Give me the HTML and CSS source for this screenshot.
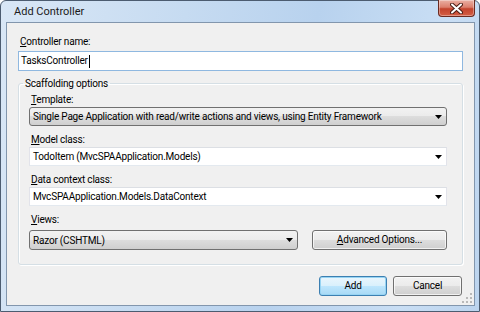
FILE: index.html
```html
<!DOCTYPE html>
<html lang="en">
<head>
    <meta charset="UTF-8">
    <title>Add Controller</title>
    <link rel="stylesheet" href="styles.css">
</head>
<body>
    <div class="window">
        <div class="titlebar">
            <span class="title">Add Controller</span>
            <div class="close">
                <svg width="13" height="11" viewBox="0 0 13 11">
                    <path d="M2 1.5 L11 9.5 M11 1.5 L2 9.5" stroke="#4a1c14" stroke-width="4" stroke-linecap="round"/>
                    <path d="M2 1.5 L11 9.5 M11 1.5 L2 9.5" stroke="#fff" stroke-width="2" stroke-linecap="round"/>
                </svg>
            </div>
        </div>
        <div class="client">
            <label class="lbl"><u>C</u>ontroller name:</label>
            <div class="textbox">TasksController<span class="caret"></span></div>

            <fieldset class="group">
                <legend>Scaffolding options</legend>
                <div class="field">
                    <label class="lbl"><u>T</u>emplate:</label>
                    <div class="combo list">
                        <span>Single Page Application with read/write actions and views, using Entity Framework</span>
                        <svg class="arrow" width="7" height="4" viewBox="0 0 7 4"><path d="M0 0 H7 L3.5 4 Z" fill="#000"/></svg>
                    </div>
                </div>
                <div class="field">
                    <label class="lbl"><u>M</u>odel class:</label>
                    <div class="combo edit">
                        <span>TodoItem (MvcSPAApplication.Models)</span>
                        <svg class="arrow" width="7" height="4" viewBox="0 0 7 4"><path d="M0 0 H7 L3.5 4 Z" fill="#000"/></svg>
                    </div>
                </div>
                <div class="field">
                    <label class="lbl"><u>D</u>ata context class:</label>
                    <div class="combo edit">
                        <span>MvcSPAApplication.Models.DataContext</span>
                        <svg class="arrow" width="7" height="4" viewBox="0 0 7 4"><path d="M0 0 H7 L3.5 4 Z" fill="#000"/></svg>
                    </div>
                </div>
                <div class="field">
                    <label class="lbl"><u>V</u>iews:</label>
                    <div class="views-row">
                        <div class="combo list views">
                            <span>Razor (CSHTML)</span>
                            <svg class="arrow" width="7" height="4" viewBox="0 0 7 4"><path d="M0 0 H7 L3.5 4 Z" fill="#000"/></svg>
                        </div>
                        <div class="btn adv"><u>A</u>dvanced Options...</div>
                    </div>
                </div>
            </fieldset>

            <div class="actions">
                <div class="btn default">Add</div>
                <div class="btn cancel">Cancel</div>
            </div>

            <svg class="grip" width="11" height="11" viewBox="0 0 11 11">
                <g fill="#b9b9b9">
                    <rect x="8" y="0" width="2" height="2"/>
                    <rect x="4" y="4" width="2" height="2"/>
                    <rect x="8" y="4" width="2" height="2"/>
                    <rect x="0" y="8" width="2" height="2"/>
                    <rect x="4" y="8" width="2" height="2"/>
                    <rect x="8" y="8" width="2" height="2"/>
                </g>
            </svg>
        </div>
    </div>
</body>
</html>
```

FILE: styles.css
```css
body {
    margin: 0;
    font-family: "Segoe UI", Roboto, "Open Sans", sans-serif;
    font-size: 10px;
    letter-spacing: -0.2px;
    color: #000;
}

.window {
    width: 480px;
    height: 312px;
    box-sizing: border-box;
    border: 1px solid #4c5c70;
    border-radius: 6px 6px 0 0;
    padding: 0 4px 5px 5px;
    display: flex;
    flex-direction: column;
    background: linear-gradient(100deg, #d9e7f6 0%, #c6dbf1 35%, #b8d2ee 60%, #c9def4 85%, #bcd4ee 100%);
}

.titlebar {
    height: 21px;
    display: flex;
    align-items: flex-start;
}

.title {
    margin: 3px 0 0 8px;
    line-height: 15px;
    font-size: 11px;
    letter-spacing: 0;
    color: #1b1b1b;
}

/* red close button in the corner */
.close {
    margin-left: auto;
    margin-top: -1px;
    width: 37px;
    height: 17px;
    box-sizing: border-box;
    border: 1px solid #6b2a20;
    border-top: none;
    border-radius: 0 0 4px 4px;
    background: linear-gradient(#eab0a4 0%, #dc7f6d 45%, #c3432d 55%, #d45e44 100%);
    box-shadow: inset 0 0 0 1px rgba(255, 255, 255, 0.35);
    display: flex;
    align-items: center;
    justify-content: center;
}

.client {
    flex: 1;
    position: relative;
    border: 1px solid #8296ad;
    background: #f0f0f0;
    padding: 11px 11px 0;
    display: flex;
    flex-direction: column;
}

.lbl {
    display: block;
    line-height: 15px;
    padding-left: 2px;
}

.textbox {
    margin-top: 2px;
    height: 20px;
    box-sizing: border-box;
    border: 1px solid #8fb8e0;
    background: #fff;
    padding: 0 2px;
    line-height: 18px;
    display: flex;
    align-items: center;
}

.caret {
    display: inline-block;
    width: 1px;
    height: 13px;
    background: #000;
    margin-left: 1px;
}

.group {
    margin: 5px 0 0;
    min-width: 0;
    padding: 1px 15px 14px 10px;
    border: 1px solid #d5dfe5;
    border-radius: 3px;
    box-shadow: inset 1px 1px 0 #fff, 1px 1px 0 #fff;
}

.group legend {
    padding: 0 2px;
    margin-left: -6px;
    line-height: 15px;
}

.field + .field {
    margin-top: 6px;
}

.combo {
    height: 19px;
    box-sizing: border-box;
    display: flex;
    align-items: center;
    padding-left: 3px;
    white-space: nowrap;
    overflow: hidden;
}

.combo.list {
    border: 1px solid #707070;
    border-radius: 3px;
    background: linear-gradient(#f2f2f2 0%, #ebebeb 50%, #dddddd 50%, #cfcfcf 100%);
}

.combo.edit {
    background: #fff;
    border: 1px solid;
    border-color: #dcdfe4 #e2e3ea #e3e9ef #e2e3ea;
}

.arrow {
    margin-left: auto;
    margin-right: 4px;
    flex-shrink: 0;
}

.views-row {
    margin-top: 3px;
    display: flex;
    justify-content: space-between;
}

.combo.views {
    width: 269px;
    height: 20px;
}

.btn {
    height: 20px;
    box-sizing: border-box;
    border: 1px solid #707070;
    border-radius: 3px;
    background: linear-gradient(#f2f2f2 0%, #ebebeb 50%, #dddddd 50%, #cfcfcf 100%);
    box-shadow: inset 0 0 0 1px rgba(255, 255, 255, 0.7);
    text-align: center;
    line-height: 18px;
}

.btn.adv {
    width: 135px;
}

.actions {
    margin-top: 11px;
    padding-right: 1px;
    display: flex;
    justify-content: flex-end;
    gap: 6px;
}

.btn.default {
    width: 68px;
    border-color: #3c7fb1;
    background: linear-gradient(#eaf6fd 0%, #d9f0fc 50%, #bee6fd 50%, #a7d9f5 100%);
    box-shadow: inset 0 0 0 1px #97d4f3;
}

.btn.cancel {
    width: 69px;
}

.grip {
    position: absolute;
    right: 1px;
    bottom: 1px;
}
```
